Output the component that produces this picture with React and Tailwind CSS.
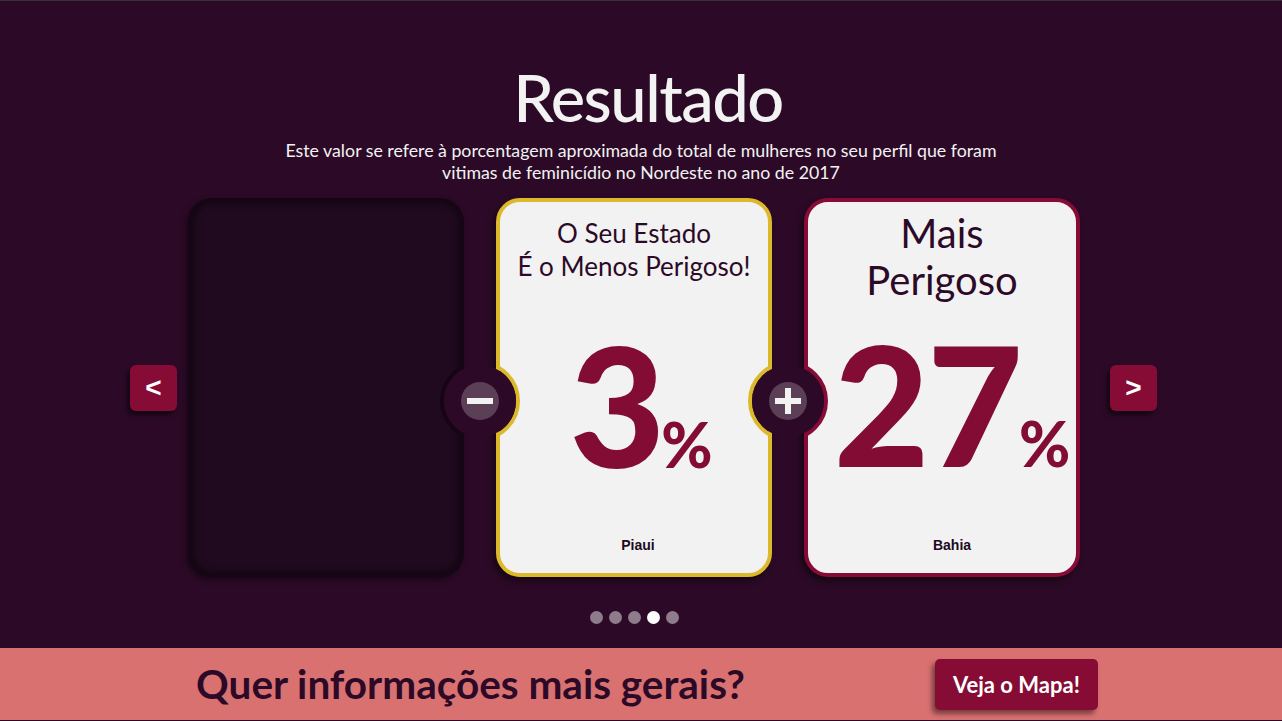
import React from "react";

const PAGE = "bg-[#2c0a27]";

// ring that cuts the notch into a card edge; clipped by the card
function Notch({ side, color }) {
    const pos = side === "left" ? "left-[-60px]" : "left-[248px]";
    return (
        <div className={`absolute top-[159px] ${pos} w-20 h-20 rounded-full border-4 ${color} ${PAGE}`} />
    );
}

function EmptyCard() {
    return (
        <div className="relative w-[276px] h-[379px] rounded-[24px] border-4 border-[#150515] bg-[#200a1f] overflow-hidden shadow-[-2px_3px_6px_rgba(0,0,0,0.45)]">
            <div className="absolute inset-0 rounded-[20px] shadow-[inset_0_0_8px_rgba(0,0,0,0.6)]" />
            <Notch side="right" color="border-[#150515]" />
        </div>
    );
}

function ResultCard({ border, notches, title, titleClass, value, valueClass, name, nameClass }) {
    return (
        <div className={`relative w-[276px] h-[379px] rounded-[24px] border-4 ${border} bg-[#f2f2f2] overflow-hidden shadow-[-3px_4px_6px_rgba(0,0,0,0.5)] flex flex-col items-center`}>
            {notches.map((n) => (
                <Notch key={n.side} side={n.side} color={n.color} />
            ))}
            <div className={`text-[#2c0a27] text-center ${titleClass}`} style={{ fontFamily: "Lato, sans-serif" }}>
                {title.map((t) => (
                    <div key={t}>{t}</div>
                ))}
            </div>
            <div className={`flex items-baseline text-[#820c34] font-black leading-none ${valueClass}`} style={{ fontFamily: "Lato, sans-serif" }}>
                <span className="text-[165px] leading-none tracking-[-2px]">{value}</span>
                <span className="text-[62px] leading-none ml-[-2px]">%</span>
            </div>
            <div className={`mt-auto mb-[20px] text-[14px] leading-4 font-bold text-[#1c0a1f] ${nameClass}`} style={{ fontFamily: "'Liberation Sans', Arial, sans-serif" }}>
                {name}
            </div>
        </div>
    );
}

function Cover({ left, sign }) {
    return (
        <div className={`absolute top-[167px] ${left} w-[72px] h-[72px] rounded-full ${PAGE} flex items-center justify-center`}>
            <div className="relative w-[38px] h-[38px] rounded-full bg-[#5b3f57] flex items-center justify-center">
                <div className="w-[26px] h-[6px] bg-[#f2f2f2]" />
                {sign === "plus" && <div className="absolute w-[6px] h-[26px] bg-[#f2f2f2]" />}
            </div>
        </div>
    );
}

function Arrow({ children }) {
    return (
        <button className="w-[47px] h-[46px] rounded-md bg-[#860c35] text-white text-[28px] font-bold leading-none flex items-center justify-center shadow-[-3px_4px_5px_rgba(0,0,0,0.55)]" style={{ fontFamily: "'Liberation Sans', Arial, sans-serif" }}>
            {children}
        </button>
    );
}

export default function App() {
    const dots = [0, 1, 2, 3, 4];
    return (
        <div className={`w-full h-[721px] ${PAGE} flex flex-col border-t border-[#3a3038] overflow-hidden`} style={{ fontFamily: "Lato, sans-serif" }}>
            <div className="flex-1 flex flex-col items-center">
                <h1 className="mt-[64px] ml-[14px] text-[65px] leading-none font-medium tracking-[-1.5px] text-[#f2f2f2]">Resultado</h1>
                <p className="mt-[9px] text-[17.75px] leading-[22px] text-[#f2f2f2] text-center">
                    Este valor se refere à porcentagem aproximada do total de mulheres no seu perfil que foram
                    <br />
                    vitimas de feminicídio no Nordeste no ano de 2017
                </p>

                <div className="mt-[15px] flex items-center pl-[5px]">
                    <Arrow>&lt;</Arrow>
                    <div className="relative ml-[11px] flex gap-8">
                        <EmptyCard />
                        <ResultCard
                            border="border-[#dcb92b]"
                            notches={[
                                { side: "left", color: "border-[#dcb92b]" },
                                { side: "right", color: "border-[#dcb92b]" },
                            ]}
                            title={["O Seu Estado", "É o Menos Perigoso!"]}
                            titleClass="pt-[15px] text-[26px] leading-[33px]"
                            value="3"
                            valueClass="mt-[39px] pl-[14px]"
                            name="Piaui"
                            nameClass="pl-2"
                        />
                        <ResultCard
                            border="border-[#860c35]"
                            notches={[{ side: "left", color: "border-[#860c35]" }]}
                            title={["Mais", "Perigoso"]}
                            titleClass="pt-[8px] text-[40px] leading-[47px]"
                            value="27"
                            valueClass="mt-[17px] pl-[20px]"
                            name="Bahia"
                            nameClass="pl-5"
                        />
                        <Cover left="left-[256px]" sign="minus" />
                        <Cover left="left-[564px]" sign="plus" />
                    </div>
                    <div className="ml-[30px]">
                        <Arrow>&gt;</Arrow>
                    </div>
                </div>

                <div className="mt-[34px] mr-[14px] flex gap-[6px]">
                    {dots.map((d) => (
                        <div key={d} className={`w-[13px] h-[13px] rounded-full ${d === 3 ? "bg-white" : "bg-[#8e7b8b]"}`} />
                    ))}
                </div>
            </div>

            <div className="h-[73px] bg-[#d97171] border-b border-[#2c0a27] flex items-center justify-center gap-[190px] pl-[12px]">
                <div className="text-[40.5px] font-bold text-[#2c0a27] leading-none">Quer informações mais gerais?</div>
                <button className="w-[163px] h-[51px] rounded-[5px] bg-[#860c35] text-white text-[22px] font-bold shadow-[-3px_4px_5px_rgba(0,0,0,0.45)]">
                    Veja o Mapa!
                </button>
            </div>
        </div>
    );
}
